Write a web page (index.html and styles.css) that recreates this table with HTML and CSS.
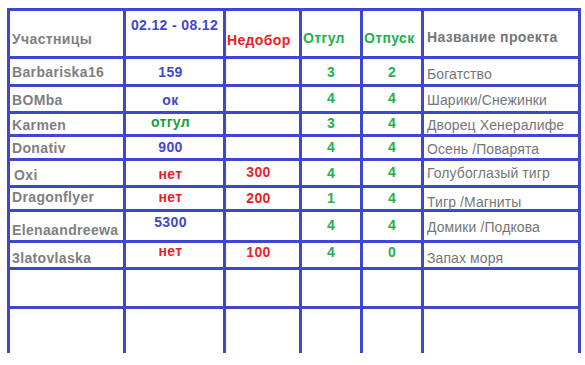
FILE: index.html
```html
<!DOCTYPE html>
<html lang="ru">
<head>
<meta charset="utf-8">
<title>Участницы</title>
<link rel="stylesheet" href="styles.css">
</head>
<body>
<div class="page">
  <div class="sheet">
    <div class="cell name v20">Участницы</div>
    <div class="cell mid blue v6">02.12 - 08.12</div>
    <div class="cell head red v21">Недобор</div>
    <div class="cell head green v19">Отгул</div>
    <div class="cell head green v19">Отпуск</div>
    <div class="cell project bold v18">Название проекта</div>

    <div class="cell name v5">Barbariska16</div>
    <div class="cell num blue v5">159</div>
    <div class="cell num red"></div>
    <div class="cell mid green v5">3</div>
    <div class="cell mid green v5">2</div>
    <div class="cell project v7">Богатство</div>

    <div class="cell name v5">BOMba</div>
    <div class="cell num blue v5">ок</div>
    <div class="cell num red"></div>
    <div class="cell mid green v3">4</div>
    <div class="cell mid green v3">4</div>
    <div class="cell project v5">Шарики/Снежинки</div>

    <div class="cell name v3">Karmen</div>
    <div class="cell num dgreen v0">отгул</div>
    <div class="cell num red"></div>
    <div class="cell mid green v1">3</div>
    <div class="cell mid green v1">4</div>
    <div class="cell project v3">Дворец Хенералифе</div>

    <div class="cell name v3">Donativ</div>
    <div class="cell num blue v2">900</div>
    <div class="cell num red"></div>
    <div class="cell mid green v2">4</div>
    <div class="cell mid green v2">4</div>
    <div class="cell project v4">Осень /Поварята</div>

    <div class="cell name indent v6">Oxi</div>
    <div class="cell num red v5">нет</div>
    <div class="cell num red v3">300</div>
    <div class="cell mid green v4">4</div>
    <div class="cell mid green v3">4</div>
    <div class="cell project v4">Голубоглазый тигр</div>

    <div class="cell name v1">Dragonflyer</div>
    <div class="cell num red v1">нет</div>
    <div class="cell num red v2">200</div>
    <div class="cell mid green v2">1</div>
    <div class="cell mid green v2">4</div>
    <div class="cell project v6">Тигр /Магниты</div>

    <div class="cell name v10">Elenaandreewa</div>
    <div class="cell num blue v2">5300</div>
    <div class="cell num red"></div>
    <div class="cell mid green v5">4</div>
    <div class="cell mid green v5">4</div>
    <div class="cell project v7">Домики /Подкова</div>

    <div class="cell name v7">3latovlaska</div>
    <div class="cell num red v0">нет</div>
    <div class="cell num red v1">100</div>
    <div class="cell mid green v1">4</div>
    <div class="cell mid green v1">0</div>
    <div class="cell project v7">Запах моря</div>

    <div class="cell"></div><div class="cell"></div><div class="cell"></div>
    <div class="cell"></div><div class="cell"></div><div class="cell"></div>

    <div class="cell"></div><div class="cell"></div><div class="cell"></div>
    <div class="cell"></div><div class="cell"></div><div class="cell"></div>
  </div>
</div>
</body>
</html>
```

FILE: styles.css
```css
html, body {
  margin: 0;
  padding: 0;
  background: #ffffff;
}

.page {
  padding: 8px 0 0 7px;
}

.sheet {
  display: grid;
  grid-template-columns: 113px 97px 73px 58px 58px 154px;
  grid-template-rows: 45px 25px 24px 20px 21px 24px 21px 28px 24px 36px 44px;
  gap: 3px;
  padding: 3px 3px 0 3px;
  background: #3f48cc;
  width: max-content;
  font-family: "Liberation Sans", Arial, sans-serif;
  font-size: 14px;
  line-height: 16px;
  font-weight: bold;
  letter-spacing: 0.35px;
}

.cell {
  background: #ffffff;
  white-space: nowrap;
  box-sizing: border-box;
}

.name {
  color: #7f7f7f;
  padding-left: 2px;
}

.name.indent {
  padding-left: 4px;
}

.num {
  text-align: center;
  padding-right: 8px;
}

.mid {
  text-align: center;
}

.head {
  padding-left: 1px;
}

.project {
  color: #767676;
  font-weight: normal;
  letter-spacing: 0.1px;
  padding-left: 3px;
}

.project.bold {
  font-weight: bold;
  letter-spacing: 0.35px;
}

.blue { color: #3f48cc; }
.red { color: #ed1c24; }
.green { color: #22b14c; }
.dgreen { color: #13a23a; }

.v0 { padding-top: 0; }
.v1 { padding-top: 1px; }
.v2 { padding-top: 2px; }
.v3 { padding-top: 3px; }
.v4 { padding-top: 4px; }
.v5 { padding-top: 5px; }
.v6 { padding-top: 6px; }
.v7 { padding-top: 7px; }
.v10 { padding-top: 10px; }
.v18 { padding-top: 18px; }
.v19 { padding-top: 19px; }
.v20 { padding-top: 20px; }
.v21 { padding-top: 21px; }
```
